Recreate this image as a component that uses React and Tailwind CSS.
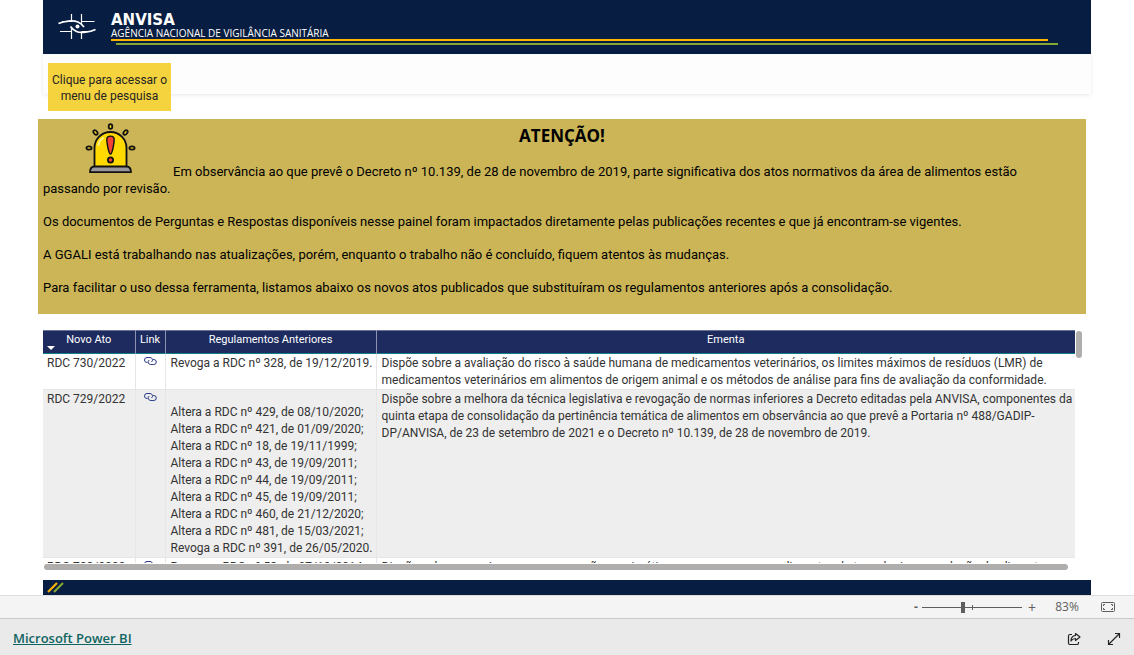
const notices = [
  'Os documentos de Perguntas e Respostas disponíveis nesse painel foram impactados diretamente pelas publicações recentes e que já encontram-se vigentes.',
  'A GGALI está trabalhando nas atualizações, porém, enquanto o trabalho não é concluído, fiquem atentos às mudanças.',
  'Para facilitar o uso dessa ferramenta, listamos abaixo os novos atos publicados que substituíram os regulamentos anteriores após a consolidação.',
];

const rows = [
  {
    ato: 'RDC 730/2022',
    anteriores: ['Revoga a RDC nº 328, de 19/12/2019.'],
    ementa: [
      'Dispõe sobre a avaliação do risco à saúde humana de medicamentos veterinários, os limites máximos de resíduos (LMR) de',
      'medicamentos veterinários em alimentos de origem animal e os métodos de análise para fins de avaliação da conformidade.',
    ],
  },
  {
    ato: 'RDC 729/2022',
    gap: true,
    anteriores: [
      'Altera a RDC nº 429, de 08/10/2020;',
      'Altera a RDC nº 421, de 01/09/2020;',
      'Altera a RDC nº 18, de 19/11/1999;',
      'Altera a RDC nº 43, de 19/09/2011;',
      'Altera a RDC nº 44, de 19/09/2011;',
      'Altera a RDC nº 45, de 19/09/2011;',
      'Altera a RDC nº 460, de 21/12/2020;',
      'Altera a RDC nº 481, de 15/03/2021;',
      'Revoga a RDC nº 391, de 26/05/2020.',
    ],
    ementa: [
      'Dispõe sobre a melhora da técnica legislativa e revogação de normas inferiores a Decreto editadas pela ANVISA, componentes da',
      'quinta etapa de consolidação da pertinência temática de alimentos em observância ao que prevê a Portaria nº 488/GADIP-',
      'DP/ANVISA, de 23 de setembro de 2021 e o Decreto nº 10.139, de 28 de novembro de 2019.',
    ],
  },
  {
    ato: 'RDC 728/2022',
    anteriores: ['Revoga a RDC nº 53, de 07/10/2014.'],
    ementa: [
      'Dispõe sobre as enzimas e as preparações enzimáticas para uso como coadjuvantes de tecnologia na produção de alimentos',
    ],
  },
];

function AnvisaLogo() {
  return (
    <svg viewBox="0 0 38 28" className="h-7 w-[38px]" fill="none" stroke="#fff" strokeWidth="1.2">
      <path d="M13.500 1v8M23.500 1v11M13.500 15V26M23.500 19v7" />
      <path d="M4 8.500h9.500M23.500 8.500h13M2 18.500h11.500M23.500 18.500h7" />
      <path d="M.5 10.500C6 8 15 7 20 9c3 1.300 4.500 3 6 5" strokeWidth="1.800" />
      <path d="M37.500 16.500C32 19 23 20.500 18.500 18.500c-3-1.300-4.500-3-6-5" strokeWidth="1.800" />
      <circle cx="19.500" cy="13.500" r="2" fill="#fff" stroke="none" />
    </svg>
  );
}

function Siren() {
  return (
    <svg viewBox="0 0 51 52" className="h-[52px] w-[51px]" stroke="#111" strokeWidth="1.8">
      <g fill="#f5d21d">
        <ellipse cx="25.500" cy="4.500" rx="1.800" ry="2.400" />
        <ellipse cx="10.500" cy="10.500" rx="1.700" ry="2.600" transform="rotate(-38 10.500 10.500)" />
        <ellipse cx="40.500" cy="10.500" rx="1.700" ry="2.600" transform="rotate(38 40.500 10.500)" />
        <ellipse cx="4" cy="26" rx="2.600" ry="1.600" />
        <ellipse cx="47" cy="26" rx="2.600" ry="1.600" />
      </g>
      <path d="M9.500 45V26a16 16 0 0 1 32 0v19z" fill="#ffd900" />
      <path d="M13.500 23c.5-3 2-5.500 4.500-7" fill="none" stroke="#fff3a0" strokeLinecap="round" />
      <path d="M21.800 17.500c0-4.500 7.400-4.500 7.400 0 0 4-2 14.500-3.700 14.500s-3.700-10.500-3.700-14.500z" fill="#f44336" strokeWidth="1.400" />
      <circle cx="25.500" cy="38" r="2.600" fill="#f44336" />
      <path d="M5 50.200c0-3.500 1.500-5.700 4.500-5.700h32c3 0 4.500 2.200 4.500 5.700z" fill="#9a979c" strokeLinejoin="round" />
    </svg>
  );
}

function LinkIcon() {
  return (
    <svg viewBox="0 0 13 10" className="h-2.5 w-[13px]" fill="none" stroke="#2b3a86" strokeWidth="1">
      <path d="M3.500 6.500h-.5a2.500 2.500 0 0 1 0-5h3a2.500 2.500 0 0 1 1.500 4.500" />
      <path d="M9 3.500h.8a2.500 2.500 0 0 1 0 5h-3a2.500 2.500 0 0 1-1.600-4.500" />
    </svg>
  );
}

function Notice() {
  return (
    <section className="mr-[10px] bg-[#cbb557] px-[5px] pb-[18px] text-[13px] leading-[17px] text-black">
      <div className="grid grid-cols-[42px_51px_37px_1fr]">
        <div className="col-start-2 row-start-1 pt-[3px] pb-[6px]">
          <Siren />
        </div>
        <h1 className="col-span-4 col-start-1 row-start-1 pt-[5px] text-center text-[17px] leading-6 font-bold">ATENÇÃO!</h1>
        <p className="col-start-4 row-start-1 self-end font-[Roboto,sans-serif] whitespace-nowrap">
          Em observância ao que prevê o Decreto nº 10.139, de 28 de novembro de 2019, parte significativa dos atos normativos da área de alimentos estão
        </p>
      </div>
      <div className="grid gap-4 font-[Roboto,sans-serif]">
        <p>passando por revisão.</p>
        {notices.map((text) => (
          <p key={text}>{text}</p>
        ))}
      </div>
    </section>
  );
}

function ActsTable() {
  return (
    <div className="mt-4 mr-[14px] ml-[5px]">
      <div className="flex gap-px">
        <div className="h-[233px] min-w-0 flex-1 overflow-hidden">
          <table className="w-full table-fixed border-collapse font-[Roboto,sans-serif] text-[12px] leading-[17px] text-[#333]">
            <colgroup>
              <col className="w-[92px]" />
              <col className="w-[30px]" />
              <col className="w-[211px]" />
              <col />
            </colgroup>
            <thead className="bg-[#1d2b5f] text-[11px] text-white">
              <tr className="h-[23px] border-t border-b border-t-[#6b7299] border-b-[#0f7f8c]">
                <th className="border-r border-[#8d94b3] p-0 align-top font-normal">
                  <div className="grid">
                    <span className="col-start-1 row-start-1">Novo Ato</span>
                    <span className="col-start-1 row-start-1 mt-[15px] ml-1 h-0 w-0 border-x-4 border-t-4 border-x-transparent border-t-white" />
                  </div>
                </th>
                <th className="border-r border-[#8d94b3] p-0 align-top font-normal">Link</th>
                <th className="border-r border-[#8d94b3] p-0 align-top font-normal">Regulamentos Anteriores</th>
                <th className="p-0 align-top font-normal">Ementa</th>
              </tr>
            </thead>
            <tbody>
              {rows.map((row) => (
                <tr key={row.ato} className="border-b border-[#e6e6e6] align-top whitespace-nowrap even:bg-[#eee]">
                  <td className="border-r border-[#e6e6e6] p-0 pt-px pl-1">{row.ato}</td>
                  <td className="border-r border-[#e6e6e6] p-0 pt-0.5">
                    <a href="#" aria-label={row.ato} className="flex justify-center">
                      <LinkIcon />
                    </a>
                  </td>
                  <td className={row.gap ? 'border-r border-[#e6e6e6] p-0 pt-[14px] pl-[5px]' : 'border-r border-[#e6e6e6] p-0 pt-px pl-[5px]'}>
                    {row.anteriores.map((line) => (
                      <div key={line}>{line}</div>
                    ))}
                  </td>
                  <td className="p-0 pt-px pl-[5px]">
                    {row.ementa.map((line) => (
                      <div key={line}>{line}</div>
                    ))}
                  </td>
                </tr>
              ))}
            </tbody>
          </table>
        </div>
        <div className="mt-px h-[27px] w-1.5 rounded-full bg-[#b0aead]" />
      </div>
      <div className="mt-px mr-[14px] ml-px h-1.5 rounded-full bg-[#b0aead]" />
    </div>
  );
}

function ZoomBar() {
  return (
    <div className="flex h-6 items-center justify-end border-t border-b border-t-[#dedede] border-b-[#c8c8c8] bg-[#f4f4f4] pr-[19px] text-[12px] text-[#605e5c]">
      <button className="w-3 font-bold" aria-label="Reduzir">-</button>
      <div className="relative flex h-3 w-[100px] items-center">
        <span className="absolute left-[50px] h-[5px] w-px bg-[#605e5c]" />
        <input
          type="range"
          min="0"
          max="100"
          defaultValue="41"
          aria-label="Zoom"
          className="h-px w-full appearance-none bg-[#605e5c] [&::-webkit-slider-thumb]:h-[11px] [&::-webkit-slider-thumb]:w-1 [&::-webkit-slider-thumb]:appearance-none [&::-webkit-slider-thumb]:bg-[#605e5c]"
        />
      </div>
      <button className="ml-1 w-3 text-[14px]" aria-label="Ampliar">+</button>
      <button className="ml-[17px] w-6">83%</button>
      <button className="ml-[22px]" aria-label="Ajustar à página">
        <svg viewBox="0 0 14 10" className="h-2.5 w-[14px]" fill="none" stroke="#605e5c">
          <rect x=".5" y=".5" width="13" height="9" rx="1" />
          <path d="M2.500 4V2.500H4M10 2.500h1.500V4M11.500 6v1.500H10M4 7.500H2.500V6" />
        </svg>
      </button>
    </div>
  );
}

function App() {
  return (
    <div className="flex min-h-screen flex-col bg-white font-['Open_Sans','Noto_Sans',sans-serif]">
      <main className="px-[38px]">
        <header className="mx-[5px] flex h-[54px] bg-[#071d41] pl-[15px] text-white">
          <div className="pt-[13px]">
            <AnvisaLogo />
          </div>
          <div className="ml-[15px] flex-1 pt-[13px]">
            <p className="font-['DejaVu_Sans',sans-serif] text-[15px] leading-[15px] font-bold">ANVISA</p>
            <p className="text-[10px] leading-[11px]">AGÊNCIA NACIONAL DE VIGILÂNCIA SANITÁRIA</p>
            <div className="mr-[43px] h-0.5 bg-[#ffb400]" />
            <div className="mt-0.5 mr-[33px] ml-[5px] h-0.5 bg-[#85a832]" />
          </div>
        </header>
        <div className="mx-[5px] grid h-[65px]">
          <div className="col-start-1 row-start-1 mt-px h-[39px] bg-[#fdfdfd] shadow-[0_1px_4px_#00000018]" />
          <button className="z-10 col-start-1 row-start-1 mt-[9px] ml-[5px] h-12 w-[123px] bg-[#f5d33e] pt-0.5 font-[Roboto,sans-serif] text-[12px] leading-4 text-[#252423]">
            Clique para acessar o menu de pesquisa
          </button>
        </div>
        <Notice />
        <ActsTable />
        <footer className="mx-[5px] mt-[10px] h-[15px] bg-[#071d41] pt-0.5 pl-1">
          <svg viewBox="0 0 17 11" className="h-[11px] w-[17px]" strokeWidth="2.2">
            <path d="M1 10 10 1" stroke="#ffb400" />
            <path d="M7 10 16 1" stroke="#85a832" />
          </svg>
        </footer>
      </main>
      <ZoomBar />
      <div className="flex flex-1 items-center justify-between bg-[#eaeaea] px-[13px] pt-1">
        <a href="#" className="text-[13px] font-semibold text-[#0f6461] underline">Microsoft Power BI</a>
        <div className="flex items-center gap-[26px]">
          <button aria-label="Compartilhar">
            <svg viewBox="0 0 14 14" className="size-3.5" fill="none" stroke="#252423" strokeWidth="1.2" strokeLinejoin="round">
              <path d="M5 2.500H3a1.500 1.500 0 0 0-1.500 1.500v7A1.500 1.500 0 0 0 3 12.500h7a1.500 1.500 0 0 0 1.500-1.500v-1" />
              <path d="M8.500 1.500 13 5 8.500 8.500v-2C6.500 6.500 5 7.500 4 9c0-3 1.500-5.200 4.500-5.500z" />
            </svg>
          </button>
          <button aria-label="Tela inteira">
            <svg viewBox="0 0 14 14" className="size-3.5" fill="none" stroke="#252423" strokeWidth="1.2">
              <path d="M1.500 12.500l11-11M8 1.500h4.500V6M1.500 8v4.500H6" />
            </svg>
          </button>
        </div>
      </div>
    </div>
  );
}

export default App;
